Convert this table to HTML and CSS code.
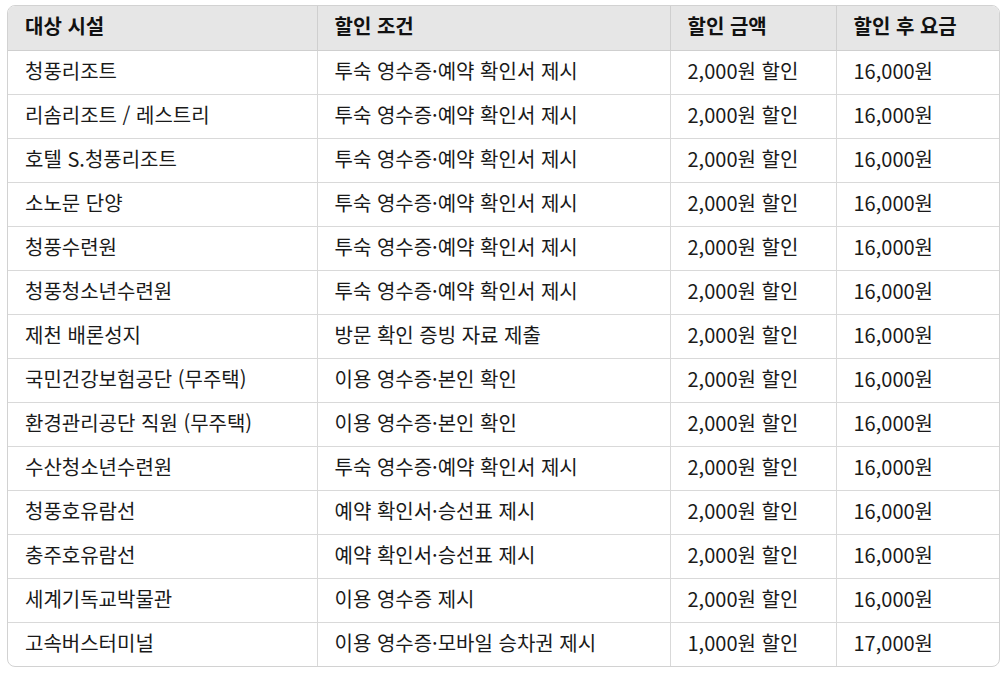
FILE: index.html
```html
<!DOCTYPE html>
<html lang="ko">
<head>
<meta charset="utf-8">
<link rel="stylesheet" href="styles.css">
</head>
<body>
<div class="wrap">
<table class="tbl">
<colgroup><col class="c1"><col class="c2"><col class="c3"><col class="c4"></colgroup>
<thead>
<tr><th>대상 시설</th><th>할인 조건</th><th>할인 금액</th><th>할인 후 요금</th></tr>
</thead>
<tbody>
<tr><td>청풍리조트</td><td>투숙 영수증·예약 확인서 제시</td><td>2,000원 할인</td><td>16,000원</td></tr>
<tr><td>리솜리조트 / 레스트리</td><td>투숙 영수증·예약 확인서 제시</td><td>2,000원 할인</td><td>16,000원</td></tr>
<tr><td>호텔 S.청풍리조트</td><td>투숙 영수증·예약 확인서 제시</td><td>2,000원 할인</td><td>16,000원</td></tr>
<tr><td>소노문 단양</td><td>투숙 영수증·예약 확인서 제시</td><td>2,000원 할인</td><td>16,000원</td></tr>
<tr><td>청풍수련원</td><td>투숙 영수증·예약 확인서 제시</td><td>2,000원 할인</td><td>16,000원</td></tr>
<tr><td>청풍청소년수련원</td><td>투숙 영수증·예약 확인서 제시</td><td>2,000원 할인</td><td>16,000원</td></tr>
<tr><td>제천 배론성지</td><td>방문 확인 증빙 자료 제출</td><td>2,000원 할인</td><td>16,000원</td></tr>
<tr><td>국민건강보험공단 (무주택)</td><td>이용 영수증·본인 확인</td><td>2,000원 할인</td><td>16,000원</td></tr>
<tr><td>환경관리공단 직원 (무주택)</td><td>이용 영수증·본인 확인</td><td>2,000원 할인</td><td>16,000원</td></tr>
<tr><td>수산청소년수련원</td><td>투숙 영수증·예약 확인서 제시</td><td>2,000원 할인</td><td>16,000원</td></tr>
<tr><td>청풍호유람선</td><td>예약 확인서·승선표 제시</td><td>2,000원 할인</td><td>16,000원</td></tr>
<tr><td>충주호유람선</td><td>예약 확인서·승선표 제시</td><td>2,000원 할인</td><td>16,000원</td></tr>
<tr><td>세계기독교박물관</td><td>이용 영수증 제시</td><td>2,000원 할인</td><td>16,000원</td></tr>
<tr><td>고속버스터미널</td><td>이용 영수증·모바일 승차권 제시</td><td>1,000원 할인</td><td>17,000원</td></tr>
</tbody>
</table>
</div>
</body>
</html>
```

FILE: styles.css
```css
html, body {
  margin: 0;
  padding: 0;
  background: #ffffff;
}
body {
  padding: 5px 6px 0 7px;
  font-family: "Noto Sans CJK KR", "Noto Sans", sans-serif;
  color: #1a1a1a;
}
.wrap {
  width: 993px;
  border: 1px solid #d2d2d2;
  border-radius: 8px;
  overflow: hidden;
  box-sizing: border-box;
}
.tbl {
  width: 100%;
  border-collapse: collapse;
  table-layout: fixed;
}
.c1 { width: 309px; }
.c2 { width: 353px; }
.c3 { width: 166px; }
.c4 { width: auto; }
.tbl th, .tbl td {
  height: 44px;
  padding: 0 0 3px 17px;
  text-align: left;
  font-size: 20px;
  line-height: 24px;
  border-right: 1px solid #d9d9d9;
  border-bottom: 1px solid #d9d9d9;
  white-space: nowrap;
  box-sizing: border-box;
}
.tbl th:last-child, .tbl td:last-child { border-right: none; }
.tbl tbody tr:last-child td { border-bottom: none; }
.tbl th {
  background: #e6e6e6;
  font-weight: 700;
  color: #111;
  border-bottom-color: #cfcfcf;
  border-right-color: #cfcfcf;
}
.tbl td {
  font-weight: 400;
}
```
